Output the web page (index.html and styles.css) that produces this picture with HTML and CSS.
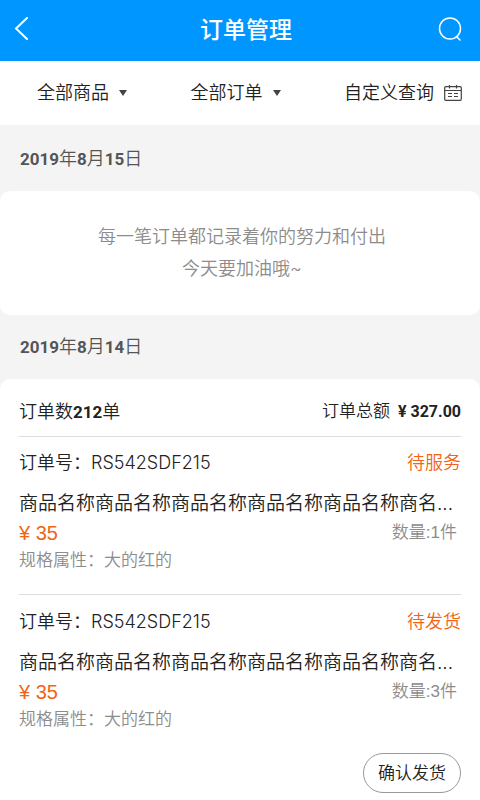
FILE: index.html
```html
<!DOCTYPE html>
<html lang="zh-CN">
<head>
<meta charset="utf-8">
<meta name="viewport" content="width=device-width, initial-scale=1">
<title>订单管理</title>
<link rel="stylesheet" href="styles.css">
</head>
<body>
<header class="topbar">
  <button class="icon-button back" type="button" aria-label="返回">
    <svg width="16" height="26" viewBox="0 0 16 26" fill="none" stroke="currentColor" stroke-width="2" stroke-linecap="round"><path d="M13 1L2 11.500L13 22"/></svg>
  </button>
  <h1 class="title">订单管理</h1>
  <button class="icon-button" type="button" aria-label="搜索">
    <svg width="24" height="26" viewBox="0 0 24 26" fill="none" stroke="currentColor" stroke-width="1.500" stroke-linecap="round"><circle cx="12" cy="11.500" r="10.500"/><path d="M18.500 19.500L22 23"/></svg>
  </button>
</header>
<nav class="filters">
  <button class="filter" type="button">全部商品
    <svg class="caret" width="8" height="6" viewBox="0 0 8 6" fill="currentColor"><path d="M0 0H8L4 6Z"/></svg>
  </button>
  <button class="filter" type="button">全部订单
    <svg class="caret" width="8" height="6" viewBox="0 0 8 6" fill="currentColor"><path d="M0 0H8L4 6Z"/></svg>
  </button>
  <button class="filter" type="button">自定义查询
    <svg class="calendar" width="18" height="16" viewBox="0 0 18 16" fill="none" stroke="currentColor" stroke-width="1.200"><rect x=".7" y="1.700" width="16.600" height="13.600" rx="1"/><path d="M.7 5.500H17.300M5.500 0V3.500M12.500 0V3.500M4 8.500H8M10 8.500H14M4 11.500H8M10 11.500H14"/></svg>
  </button>
</nav>
<main>
  <h2 class="date"><b>2019</b>年<b>8</b>月<b>15</b>日</h2>
  <section class="card empty">
    <p>每一笔订单都记录着你的努力和付出</p>
    <p>今天要加油哦~</p>
  </section>
  <h2 class="date"><b>2019</b>年<b>8</b>月<b>14</b>日</h2>
  <section class="card day">
    <div class="summary">
      <span class="count">订单数<b>212</b>单</span>
      <span class="total">订单总额<b>¥ 327.00</b></span>
    </div>
    <article class="order">
      <div class="row number"><span>订单号：RS542SDF215</span><span class="status">待服务</span></div>
      <h3 class="name">商品名称商品名称商品名称商品名称商品名称商名...</h3>
      <div class="row price"><span>¥ 35</span><span class="quantity">数量:1件</span></div>
      <p class="spec">规格属性：大的红的</p>
    </article>
    <article class="order">
      <div class="row number"><span>订单号：RS542SDF215</span><span class="status">待发货</span></div>
      <h3 class="name">商品名称商品名称商品名称商品名称商品名称商名...</h3>
      <div class="row price"><span>¥ 35</span><span class="quantity">数量:3件</span></div>
      <p class="spec">规格属性：大的红的</p>
      <button class="confirm" type="button">确认发货</button>
    </article>
  </section>
</main>
</body>
</html>
```
FILE: styles.css
```css
* { box-sizing: border-box; }
body {
  margin: 0;
  background: #f4f4f4;
  color: #222;
  font-family: Inter, "Noto Sans CJK SC", sans-serif;
  font-weight: 350;
}
h1, h2, h3, p { margin: 0; font-weight: inherit; }
button {
  padding: 0;
  border: 0;
  background: none;
  color: inherit;
  font: inherit;
}
svg { display: block; }
.topbar {
  display: flex;
  align-items: center;
  justify-content: space-between;
  height: 61px;
  padding: 0 18px 2px 14px;
  background: #0096ff;
  color: #fff;
}
.icon-button { display: flex; }
.back { width: 40px; }
.title {
  font-size: 23px;
  line-height: 32px;
  font-weight: 500;
}
.filters {
  display: flex;
  align-items: center;
  justify-content: space-between;
  height: 64px;
  padding: 0 18px 0 37px;
  background: #fff;
}
.filter {
  display: flex;
  align-items: center;
  gap: 10px;
  font-size: 18px;
  line-height: 26px;
}
.caret, .calendar { color: #444; }
.date {
  padding: 22px 20px 20px;
  color: #555;
  font-size: 18px;
  line-height: 24px;
}
.date b { font-size: 17px; }
.card + .date { padding-top: 20px; }
.date b, .summary b { font-family: Roboto, sans-serif; font-weight: 700; }
.card { background: #fff; border-radius: 10px; }
.empty {
  padding: 30px 18px 30px 22px;
  color: #8c8c8c;
  font-size: 18px;
  line-height: 32px;
  text-align: center;
}
.day { padding: 0 19px 7px; border-radius: 10px 10px 0 0; }
.summary {
  display: flex;
  align-items: center;
  justify-content: space-between;
  height: 58px;
  padding-top: 4px;
  border-bottom: 1px solid #ddd;
}
.count { font-size: 18px; }
.count b { font-size: 17px; }
.total { font-size: 17px; }
.total b { margin-left: 8px; font-size: 16px; }
.order { padding: 14px 0 22px; }
.order + .order { padding-top: 15px; border-top: 1px solid #ddd; }
.order:last-child { padding-bottom: 0; }
.row {
  display: flex;
  align-items: center;
  justify-content: space-between;
}
.number { font-size: 18px; line-height: 24px; }
.status, .price { color: #f06414; }
.name {
  margin-top: 15px;
  overflow: hidden;
  font-size: 19px;
  line-height: 28px;
  white-space: nowrap;
}
.price {
  font-family: "Liberation Sans", "Noto Sans CJK SC", sans-serif;
  font-size: 20px;
  line-height: 30px;
}
.quantity { padding-right: 4px; font-size: 17px; }
.quantity, .spec { color: #8c8c8c; }
.spec { font-size: 17px; line-height: 24px; }
.confirm {
  display: block;
  margin: 22px 0 0 auto;
  padding: 6px 14px;
  border: 1px solid #999;
  border-radius: 20px;
  font-size: 17px;
  line-height: 26px;
}
```
